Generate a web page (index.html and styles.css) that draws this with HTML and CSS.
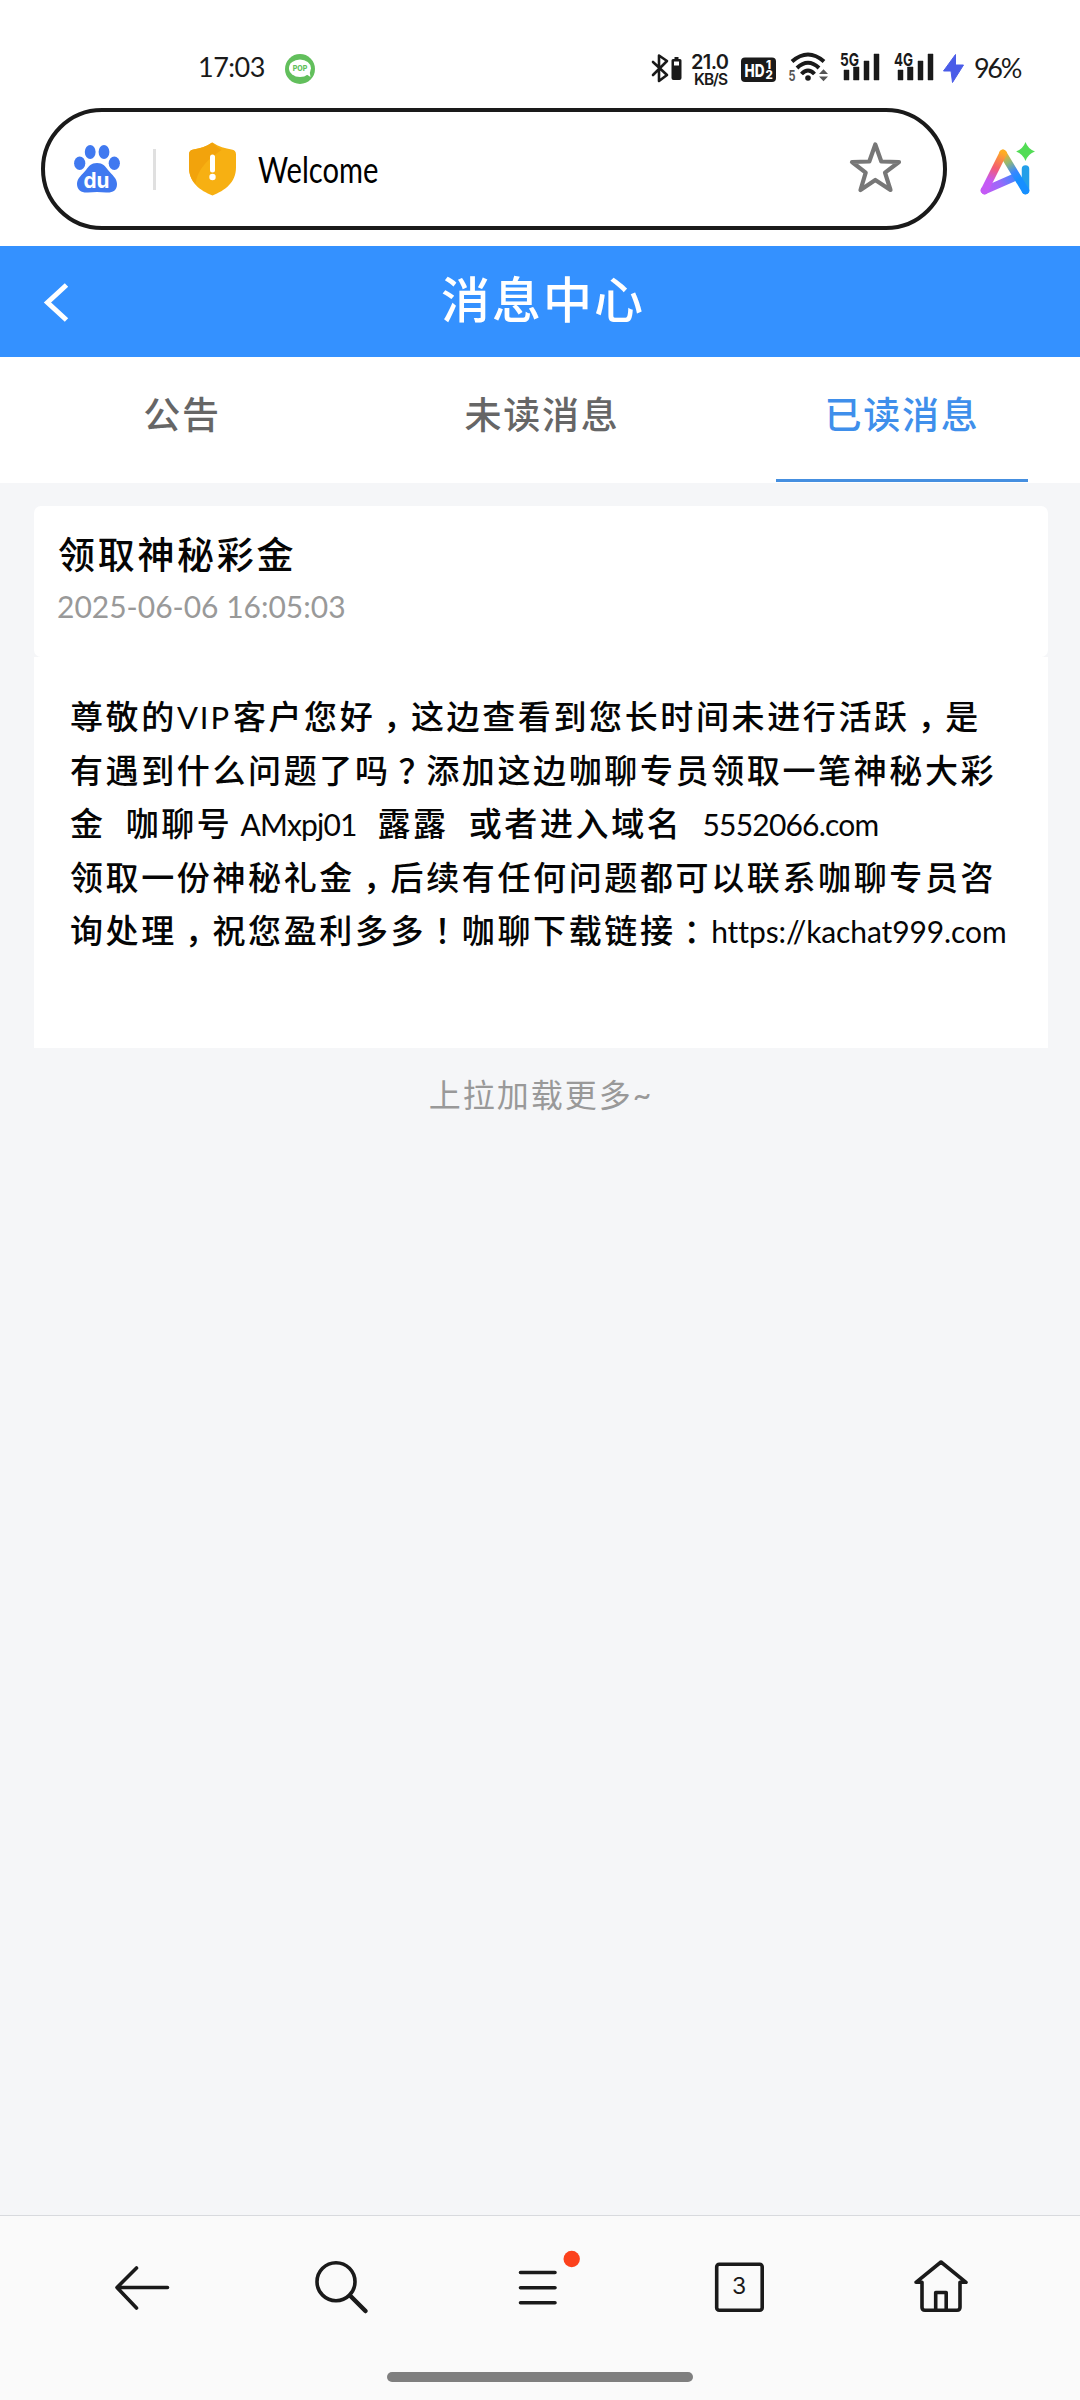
FILE: index.html
```html
<!DOCTYPE html>
<html lang="zh-CN">
<head>
<meta charset="utf-8">
<title>消息中心</title>
<link rel="stylesheet" href="styles.css">
</head>
<body>
<div class="screen">
  <div class="status">
    <span class="time">17:03</span>
    <svg class="pop" width="30" height="30" viewBox="285 54 30 30"><circle cx="300" cy="69" r="15" fill="#62bf5c"/><ellipse cx="300" cy="68.3" rx="11" ry="8.8" fill="#fff"/><path d="M306 74l4.500 3-1-6z" fill="#fff"/><text x="300" y="71.300" font-size="7" font-weight="800" text-anchor="middle" fill="#62bf5c">POP</text></svg>
    <svg class="radios" width="316" height="40" viewBox="650 50 316 40" fill="#1a1a1a">
      <path d="M653 62l14 13-8 6V55.500l8 5.500-14 14" fill="none" stroke="#1a1a1a" stroke-width="2.600" stroke-linejoin="round" stroke-linecap="round"/>
      <path d="M674.500 57h4v2h1.500q1.500 0 1.500 1.500V78q0 2-2 2h-6q-2 0-2-2V60.500q0-1.500 1.500-1.500h1.500zM674 61.500v4h5v-4z" fill-rule="evenodd"/>
      <text x="691" y="69" font-size="20" font-weight="600" textLength="38">21.0</text>
      <text x="694" y="84.500" font-size="15.500" font-weight="600" textLength="34">KB/S</text>
      <rect x="741" y="57.500" width="35" height="24.500" rx="4"/>
      <g fill="#fff"><text x="744.500" y="76.500" font-size="17.500" font-weight="800" textLength="20" lengthAdjust="spacingAndGlyphs">HD</text><text x="766" y="69" font-size="11.500" font-weight="800">1</text><text x="765.500" y="79" font-size="11.500" font-weight="800">2</text></g>
      <g fill="none" stroke="#1a1a1a" stroke-width="4"><path d="M792 61.500Q808 47.500 824 61.500"/><path d="M797 68Q808 57.500 819 68"/><path d="M801.500 74Q808 67 814.500 74"/></g>
      <circle cx="808" cy="78" r="2.800"/>
      <text x="788.500" y="81" font-size="14" font-weight="700" fill="#555" textLength="7" lengthAdjust="spacingAndGlyphs">5</text>
      <path d="M819 74h9l-4.500-4.800zM819 76.500h9l-4.500 4.800z" fill="#555"/>
      <text x="840" y="66" font-size="18" font-weight="700" textLength="19" lengthAdjust="spacingAndGlyphs">5G</text>
      <path d="M844 70h5v10h-5zM853.500 67h5.500v13h-5.500zM864 61h5v19h-5zM874 54h5v26h-5z" stroke="#1a1a1a" stroke-width=".5" stroke-linejoin="round"/>
      <text x="894" y="66" font-size="18" font-weight="700" textLength="19" lengthAdjust="spacingAndGlyphs">4G</text>
      <path d="M898 70h5v10h-5zM907.500 67h5.500v13h-5.500zM918 61h5v19h-5zM928 54h5v26h-5z" stroke="#1a1a1a" stroke-width=".5" stroke-linejoin="round"/>
      <path d="M955.500 54.500L943.500 71h7.500l1.500 11.500L963.500 65h-8z" fill="#4a5ce8" stroke="#4a5ce8" stroke-linejoin="round"/>
    </svg>
    <span class="level">96%</span>
  </div>
  <div class="top">
    <div class="address">
      <svg class="paw" width="46" height="48" viewBox="74 145 46 48" fill="#4079f0"><ellipse cx="90.200" cy="152" rx="5.400" ry="7"/><ellipse cx="104" cy="152" rx="5.400" ry="7"/><ellipse cx="79.700" cy="163.300" rx="5.600" ry="6.800"/><ellipse cx="114.300" cy="163.300" rx="5.600" ry="6.800"/><path d="M97 163c6 0 8 3 11 7 4 5 9 8 9 14 0 7-5 9-11 8.500-6-.7-12-.7-18 0-6 .5-11-2-11-8.500 0-6 5-9 9-14 3-4 5-7 11-7z"/><text x="96.500" y="187.500" font-size="22" font-weight="700" text-anchor="middle" fill="#fff" textLength="26" lengthAdjust="spacingAndGlyphs">du</text></svg>
      <i class="divider"></i>
      <svg class="shield" width="48" height="54" viewBox="188 142 48 54"><path d="M212.500 142.500c6 4 13 6 19 7 3 .6 4.500 2 4.500 5v13c0 15-11 23-23.500 28-12.500-5-23.500-13-23.500-28v-13c0-3 1.500-4.400 4.500-5 6-1 13-3 19-7z" fill="#f7b012"/><path d="M212 142.500c-6 4-12 6-18.500 7-3 .6-4.500 2-4.500 5v13c0 7 2.500 12 6.500 16.500 2-12 8-22 26-34-4-2-6-5-9.500-7.500z" fill="#f2a30c"/><path d="M212.500 157v13" stroke="#fff" stroke-width="5" stroke-linecap="round"/><circle cx="212.500" cy="177" r="3.200" fill="#fff"/></svg>
      <span class="site">Welcome</span>
      <svg class="star" width="52" height="52" viewBox="849 140 52 52"><path d="M875.300 143.500L881.300 160.500 899 161 885 171.700 890.500 189 875.300 179 860.500 189 865.700 171.700 852 161 869.300 160.500Z" fill="none" stroke="#777" stroke-width="4.200" stroke-linejoin="round"/></svg>
    </div>
    <svg class="ai" width="56" height="56" viewBox="980 140 56 56"><defs><linearGradient id="ai" x1="983" y1="193" x2="1028" y2="162" gradientUnits="userSpaceOnUse"><stop stop-color="#c45af5"/><stop offset=".35" stop-color="#9b68fa"/><stop offset=".7" stop-color="#2f8dff"/><stop offset="1" stop-color="#23a9df"/></linearGradient><linearGradient id="hot" x1="1002" y1="152" x2="990" y2="181" gradientUnits="userSpaceOnUse"><stop stop-color="#ffad22"/><stop offset=".55" stop-color="#f45d72"/><stop offset="1" stop-color="#c45af5"/></linearGradient><linearGradient id="cool" x1="1003" y1="153" x2="1019" y2="180" gradientUnits="userSpaceOnUse"><stop stop-color="#ffad22"/><stop offset=".35" stop-color="#91b974"/><stop offset=".7" stop-color="#3987ff"/><stop offset="1" stop-color="#168fff"/></linearGradient></defs><g fill="none" stroke-width="7.500" stroke-linecap="round" stroke-linejoin="round"><path d="M984.500 190.500L1013 178" stroke="url(#ai)"/><path d="M1025.500 169v21.500" stroke="#239fe9"/><path d="M1003 153.500l22.500 37" stroke="url(#cool)"/><path d="M1003 153.500l-18.500 37" stroke="url(#hot)"/></g><path d="M1025.500 142q2.500 7 9.500 9.500-7 2.500-9.500 9.500-2.500-7-9.500-9.500 7-2.500 9.500-9.500z" fill="#52dc55"/></svg>
  </div>
  <header class="header">
    <svg width="30" height="44" viewBox="42 279 30 44"><path d="M66.500 284L47.500 301.500l19 17.500" fill="none" stroke="#fff" stroke-width="5"/></svg>
    <h1>消息中心</h1>
  </header>
  <nav class="tabs"><span>公告</span><span>未读消息</span><span class="active">已读消息</span></nav>
  <main>
    <section class="card head"><h2>领取神秘彩金</h2><time>2025-06-06 16:05:03</time></section>
    <section class="card body">
      <div>尊敬的<span class="vip">VIP</span>客户您好<span class="p">，</span>这边查看到您长时间未进行活跃<span class="p">，</span>是</div>
      <div>有遇到什么问题了吗<span class="p">？</span>添加这边咖聊专员领取一笔神秘大彩</div>
      <div>金<span class="gap"></span>咖聊号<span class="account">AMxpj01</span>露露<span class="gap wide"></span>或者进入域名<span class="domain">5552066.com</span></div>
      <div>领取一份神秘礼金<span class="p">，</span>后续有任何问题都可以联系咖聊专员咨</div>
      <div>询处理<span class="p">，</span>祝您盈利多多<span class="p">！</span>咖聊下载链接<span class="p">：</span><span class="url">https://kachat999.com</span></div>
    </section>
    <p class="more">上拉加载更多~</p>
  </main>
  <footer>
    <div class="tools">
      <svg width="60" height="60" viewBox="112 2258 60 60"><path d="M167.500 2287.500H117M136.500 2268L117 2287.500l19.500 20.500"/></svg>
      <svg width="60" height="60" viewBox="311 2258 60 60"><circle cx="336" cy="2281.700" r="19"/><path d="M350 2295.500l15.500 15.500" stroke-width="4.500"/></svg>
      <svg width="60" height="60" viewBox="510 2258 60 60"><path d="M520.500 2272.500h34.500M520.500 2287.700h34.500M520.500 2302.700h34.500"/><circle cx="571.700" cy="2259" r="8.200" fill="#fc411c" stroke="none"/></svg>
      <svg width="60" height="60" viewBox="709 2258 60 60"><rect x="716.700" y="2264.300" width="45.500" height="46" rx="2.500"/><text x="739.200" y="2294" font-size="23" text-anchor="middle" fill="#1a1a1a" stroke="none">3</text></svg>
      <svg width="60" height="60" viewBox="908 2258 60 60"><path d="M922 2282.300h-6l25-20.300 25 20.300h-6M922 2282.300v25q0 3 3 3h32q3 0 3-3v-25M935.700 2310v-17.500h10.500v17.500"/></svg>
    </div>
    <i class="homebar"></i>
  </footer>
</div>
</body>
</html>
```
FILE: styles.css
```css
* { box-sizing: border-box; }
body { margin: 0; background: #fff; color: #050505; font-family: Lato, "Noto Sans CJK SC", sans-serif; }
svg { display: block; flex: none; overflow: visible; }
svg text { font-family: Inter, "Liberation Sans", sans-serif; }
.screen { width: 1080px; height: 2400px; display: flex; flex-direction: column; overflow: hidden; }
.status { height: 108px; padding: 28px 0 0 198px; display: flex; align-items: flex-start; color: #1a1a1a; font-size: 27px; line-height: 40px; }
.status svg { margin-top: 22px; }
.status .pop { margin-top: 26px; }
.time { width: 87px; margin-top: 19px; letter-spacing: -.5px; }
.time, .level { white-space: nowrap; }
.radios { margin-left: 335px; }
.level { margin: 20px 0 0 8px; letter-spacing: -2.300px; }
.top { height: 138px; display: flex; padding-left: 41px; }
.address { width: 906px; height: 122px; border: 4px solid #1a1a1a; border-radius: 61px; display: flex; align-items: center; padding: 0 42px 0 29px; }
.divider { width: 3px; height: 41px; background: #e0e0e0; margin-left: 33px; }
.shield { margin-left: 32px; }
.site { margin-left: 22px; font-size: 36px; line-height: 50px; color: #000; transform: scaleX(.81); transform-origin: left center; }
.star { margin: -4px 0 0 auto; }
.ai { margin: 32px 0 0 33px; }
.header { height: 111px; background: #3491ff; display: flex; align-items: center; padding-left: 42px; }
h1 { flex: 1; margin: -5px 69px 0 0; text-align: center; color: #fff; font-size: 49px; line-height: 72px; font-weight: 500; letter-spacing: 2px; padding-left: 3px; }
.tabs { height: 126px; background: #fff; display: flex; justify-content: space-between; color: #666; font-size: 37px; line-height: 54px; font-weight: 500; letter-spacing: 1.800px; }
.tabs span { width: 252px; margin: 0 53px 0 55px; padding: 31px 0 0 2px; text-align: center; }
.tabs .active { color: #3f8feb; border-bottom: 3.500px solid #458fe0; margin: 0 52px 1px 56px; padding-left: 0; }
main { flex: 1; background: #f5f6f8; padding: 23px 32px 0 34px; }
.card { background: #fff; }
.head { height: 151px; border-radius: 7px; padding: 21px 23px; }
h2 { margin: 0; font-size: 37px; line-height: 56px; font-weight: 500; letter-spacing: 2.700px; padding-left: 1px; }
time { display: block; font-size: 30px; line-height: 46px; color: #999; letter-spacing: 0; }
.body { height: 391px; padding: 33px 0 0 36px; font-size: 33px; line-height: 53.500px; font-weight: 500; letter-spacing: 2.620px; white-space: nowrap; }
.body div { height: 53.500px; }
.body span { display: inline-block; letter-spacing: 0; font-weight: 400; }
.body .p { width: 35.620px; padding-left: 8px; font-feature-settings: "halt"; font-weight: 500; }
.body .vip { width: 56px; font-size: 31px; letter-spacing: 2px; }
.body .gap { width: 20px; }
.body .wide { width: 20px; }
.body .account { width: 145px; padding-left: 8px; font-size: 30px; letter-spacing: -.8px; }
.body .domain { width: 190px; padding-left: 20px; font-size: 30px; letter-spacing: -.8px; }
.body .url { font-size: 30px; letter-spacing: -.1px; }
.more { margin: 22px 0 0; text-align: center; color: #999; font-size: 32px; line-height: 50px; letter-spacing: 2px; }
footer { height: 185px; background: #fafafa; border-top: 1px solid #d8dade; display: flex; flex-direction: column; align-items: center; }
.tools { width: 1080px; padding: 42px 112px 0; display: flex; justify-content: space-between; }
.tools svg { fill: none; stroke: #1a1a1a; stroke-width: 3.600; stroke-linecap: round; stroke-linejoin: round; }
.homebar { width: 306px; height: 10px; border-radius: 5px; background: #7f7f7f; margin-top: 54px; }
```
